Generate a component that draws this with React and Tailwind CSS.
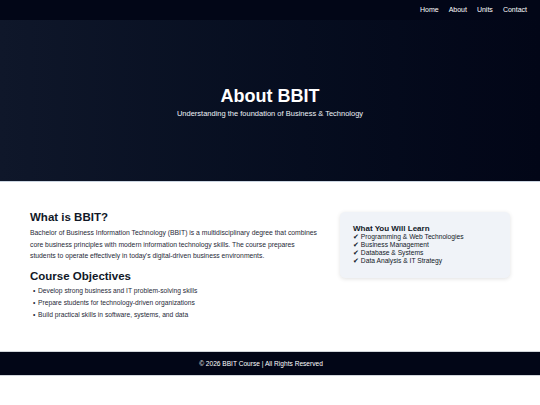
export default function App() {
  return (
    <div className="w-[540px] min-h-[405px] bg-white" style={{ fontFamily: '"Liberation Sans", Arial, sans-serif' }}>
      <nav className="h-[20px] bg-[#020617] flex items-center justify-end pr-[13px] gap-[10px] text-[7px] text-white">
        <span>Home</span>
        <span>About</span>
        <span>Units</span>
        <span>Contact</span>
      </nav>
      <header className="h-[162px] bg-gradient-to-r from-[#0f172a] to-[#020617] border-b border-[#cbd5e1] flex flex-col items-center justify-center text-white">
        <h1 className="text-[18px] font-bold leading-[20px] mt-[4px]">About BBIT</h1>
        <p className="text-[7.5px] leading-[10px] mt-[3px] text-[#eef2f7]">Understanding the foundation of Business &amp; Technology</p>
      </header>
      <main className="flex gap-[20px] px-[30px] pt-[28px] pb-[30px] h-[169px]">
        <div className="w-[290px] shrink-0 text-[#111827]">
          <h2 className="text-[11.5px] font-bold leading-[14px]">What is BBIT?</h2>
          <p className="w-[300px] text-[6.8px] leading-[11.5px] mt-[3px] text-[#1f2937]">
            Bachelor of Business Information Technology (BBIT) is a multidisciplinary degree that combines core business principles with modern information technology skills. The course prepares<br />students to operate effectively in today's digital-driven business environments.
          </p>
          <h2 className="text-[11.5px] font-bold leading-[14px] mt-[7px]">Course Objectives</h2>
          <ul className="text-[6.7px] leading-[12px] mt-[2px] text-[#1f2937]">
            <li className="flex"><span className="w-[8px] pl-[3px]">•</span>Develop strong business and IT problem-solving skills</li>
            <li className="flex"><span className="w-[8px] pl-[3px]">•</span>Prepare students for technology-driven organizations</li>
            <li className="flex"><span className="w-[8px] pl-[3px]">•</span>Build practical skills in software, systems, and data</li>
          </ul>
        </div>
        <div className="w-[170px] self-start mt-[2px] bg-[#f0f3f8] rounded-[5px] shadow-[0_1px_4px_rgba(0,0,0,0.12)] px-[13px] pt-[12px] pb-[13px] text-[#111827]">
          <h3 className="text-[8px] font-bold leading-[9px]">What You Will Learn</h3>
          <ul className="text-[6.7px] leading-[8px]">
            <li>✔ Programming &amp; Web Technologies</li>
            <li>✔ Business Management</li>
            <li>✔ Database &amp; Systems</li>
            <li>✔ Data Analysis &amp; IT Strategy</li>
          </ul>
        </div>
      </main>
      <footer className="h-[25px] bg-[#020617] border-y border-[#d1d5db] flex items-center justify-center pr-[18px] text-white text-[6.6px]">
        © 2026 BBIT Course | All Rights Reserved
      </footer>
    </div>
  );
}
